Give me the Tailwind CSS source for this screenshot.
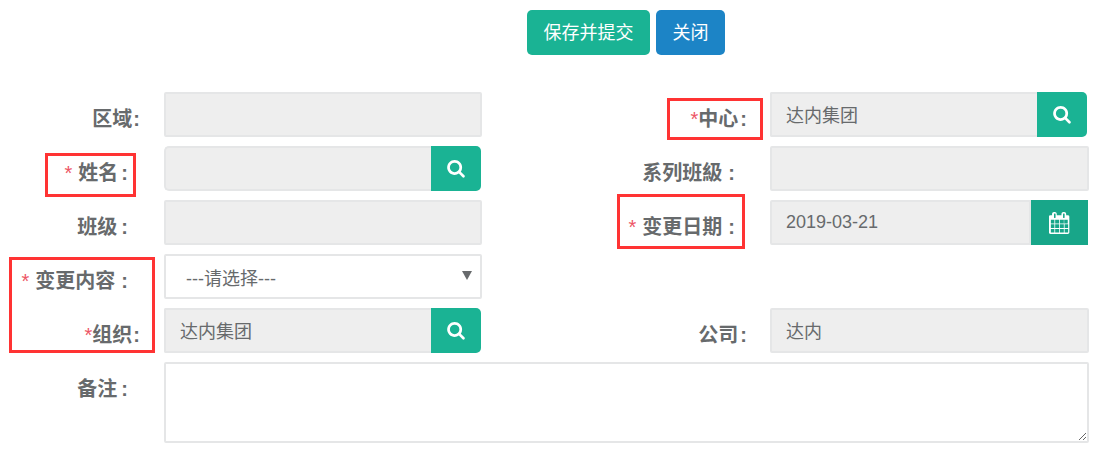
<!DOCTYPE html>
<html lang="zh-CN">
<head>
  <meta charset="UTF-8">
  <title>变更</title>
  <script src="https://cdn.jsdelivr.net/npm/@tailwindcss/browser@4"></script>
</head>
<body class="bg-white overflow-hidden font-['Liberation_Sans','Noto_Sans_CJK_SC',sans-serif] text-[18px] text-[#676a6c]">
<div class="relative w-[1101px] h-[450px] pt-[10px]">
  <!-- 按钮 -->
  <div class="flex gap-[6px] pl-[527px] mb-[37px]">
    <button type="button" class="h-[45px] w-[123px] pt-[1px] rounded-[5px] bg-[#1ab394] text-white">保存并提交</button>
    <button type="button" class="h-[45px] w-[69px] pt-[1px] rounded-[5px] bg-[#1c84c6] text-white">关闭</button>
  </div>

  <form class="grid grid-cols-[164px_318px_288px_319px] gap-y-[9px]">
    <!-- row 1 -->
    <label class="h-[45px] pt-[8px] pr-[24px] flex items-center justify-end font-bold text-[20px]">区域<span class="ml-[1px]">:</span></label>
    <input readonly class="h-[45px] w-[318px] border-2 border-[#e5e6e7] bg-[#eeeeee] rounded-[2px] px-[14px]">
    <label class="h-[45px] pt-[8px] pr-[23px] flex items-center justify-end font-bold text-[20px]"><span class="text-[#ed5565] font-normal">*</span>中心<span class="ml-[2px]">:</span></label>
    <div class="flex w-[317px]">
      <input readonly value="达内集团" class="h-[45px] w-[267px] border-2 border-r-0 border-[#e5e6e7] bg-[#eeeeee] rounded-l-[2px] px-[14px] pb-[2px]">
      <button type="button" class="h-[45px] w-[50px] pt-[1px] bg-[#1ab394] rounded-r-[5px] flex items-center justify-center">
        <svg class="w-[18px] h-[19px]" viewBox="0 0 1664 1792" fill="#fff"><path d="M1152 704q0-185-131.500-316.500t-316.500-131.500-316.500 131.500-131.500 316.500 131.500 316.500 316.500 131.500 316.500-131.500 131.500-316.500zm512 832q0 52-38 90t-90 38q-54 0-90-38l-343-342q-179 124-399 124-143 0-273.500-55.500t-225-150-150-225-55.500-273.500 55.500-273.500 150-225 225-150 273.500-55.500 273.500 55.500 225 150 150 225 55.500 273.500q0 220-124 399l343 343q37 37 37 90z"/></svg>
      </button>
    </div>

    <!-- row 2 -->
    <label class="h-[45px] pt-[8px] pr-[36px] flex items-center justify-end font-bold text-[20px]"><span class="text-[#ed5565] font-normal mr-[6px]">*</span>姓名<span class="ml-[3px]">:</span></label>
    <div class="flex w-[317px]">
      <input readonly class="h-[45px] w-[267px] border-2 border-r-0 border-[#e5e6e7] bg-[#eeeeee] rounded-l-[5px] px-[14px]">
      <button type="button" class="h-[45px] w-[50px] pt-[1px] bg-[#1ab394] rounded-r-[5px] flex items-center justify-center">
        <svg class="w-[18px] h-[19px]" viewBox="0 0 1664 1792" fill="#fff"><path d="M1152 704q0-185-131.500-316.500t-316.500-131.500-316.500 131.500-131.500 316.500 131.500 316.500 316.500 131.500 316.500-131.500 131.500-316.500zm512 832q0 52-38 90t-90 38q-54 0-90-38l-343-342q-179 124-399 124-143 0-273.500-55.500t-225-150-150-225-55.500-273.500 55.500-273.500 150-225 225-150 273.500-55.500 273.500 55.500 225 150 150 225 55.500 273.500q0 220-124 399l343 343q37 37 37 90z"/></svg>
      </button>
    </div>
    <label class="h-[45px] pt-[8px] pr-[35px] flex items-center justify-end font-bold text-[20px]">系列班級<span class="ml-[6px]">:</span></label>
    <input readonly class="h-[45px] w-[319px] border-2 border-[#e5e6e7] bg-[#eeeeee] rounded-[2px] px-[14px]">

    <!-- row 3 -->
    <label class="h-[45px] pt-[8px] pr-[36px] flex items-center justify-end font-bold text-[20px]">班级<span class="ml-[4px]">:</span></label>
    <input readonly class="h-[45px] w-[318px] border-2 border-[#e5e6e7] bg-[#eeeeee] rounded-[2px] px-[14px]">
    <label class="h-[45px] pt-[8px] pr-[35px] flex items-center justify-end font-bold text-[20px]"><span class="text-[#ed5565] font-normal mr-[6px]">*</span>变更日期<span class="ml-[6px]">:</span></label>
    <div class="flex w-[318px]">
      <input readonly value="2019-03-21" class="h-[45px] w-[261px] border-2 border-[#e5e6e7] bg-[#eeeeee] rounded-l-[2px] px-[14px]">
      <button type="button" class="h-[45px] w-[57px] bg-[#18a689] flex items-center justify-center">
        <svg class="w-[21px] h-[22px]" viewBox="0 0 1664 1792" fill="#fff"><path d="M128 1664h288v-288h-288v288zm352 0h320v-288h-320v288zm-352-352h288v-320h-288v320zm352 0h320v-320h-320v320zm-352-384h288v-288h-288v288zm736 736h320v-288h-320v288zm-384-736h320v-288h-320v288zm768 736h288v-288h-288v288zm-384-352h320v-320h-320v320zm-352-864v-288q0-13-9.500-22.500t-22.500-9.500h-64q-13 0-22.500 9.500t-9.500 22.500v288q0 13 9.500 22.500t22.500 9.500h64q13 0 22.500-9.500t9.500-22.500zm736 864h288v-320h-288v320zm-384-384h320v-288h-320v288zm352 0h288v-288h-288v288zm32-480v-288q0-13-9.500-22.500t-22.500-9.500h-64q-13 0-22.500 9.500t-9.500 22.500v288q0 13 9.500 22.500t22.500 9.500h64q13 0 22.500-9.500t9.500-22.500zm384-64v1280q0 52-38 90t-90 38h-1408q-52 0-90-38t-38-90v-1280q0-52 38-90t90-38h128v-96q0-66 47-113t113-47h64q66 0 113 47t47 113v96h384v-96q0-66 47-113t113-47h64q66 0 113 47t47 113v96h128q52 0 90 38t38 90z"/></svg>
      </button>
    </div>

    <!-- row 4 -->
    <label class="h-[45px] pt-[8px] pr-[36px] flex items-center justify-end font-bold text-[20px] whitespace-nowrap"><span class="text-[#ed5565] font-normal mr-[6px]">*</span>变更内容<span class="ml-[6px]">:</span></label>
    <div class="relative w-[318px]">
      <select class="appearance-none h-[45px] w-[318px] border-2 border-[#e5e6e7] bg-white rounded-[2px] pl-[20px] pt-[6px]">
        <option>---请选择---</option>
      </select>
      <svg class="absolute left-[298px] top-[17px] w-[10px] h-[9px]" viewBox="0 0 10 9" fill="#676a6c"><path d="M0 0h10L5 9z"/></svg>
    </div>
    <div class="col-span-2"></div>

    <!-- row 5 -->
    <label class="h-[45px] pt-[8px] pr-[24px] flex items-center justify-end font-bold text-[20px]"><span class="text-[#ed5565] font-normal">*</span>组织<span class="ml-[1px]">:</span></label>
    <div class="flex w-[317px]">
      <input readonly value="达内集团" class="h-[45px] w-[267px] border-2 border-r-0 border-[#e5e6e7] bg-[#eeeeee] rounded-l-[2px] px-[14px] pb-[2px]">
      <button type="button" class="h-[45px] w-[50px] pt-[1px] bg-[#1ab394] rounded-r-[5px] flex items-center justify-center">
        <svg class="w-[18px] h-[19px]" viewBox="0 0 1664 1792" fill="#fff"><path d="M1152 704q0-185-131.500-316.500t-316.500-131.500-316.500 131.500-131.500 316.500 131.500 316.500 316.500 131.500 316.500-131.500 131.500-316.500zm512 832q0 52-38 90t-90 38q-54 0-90-38l-343-342q-179 124-399 124-143 0-273.500-55.500t-225-150-150-225-55.500-273.500 55.500-273.500 150-225 225-150 273.500-55.500 273.500 55.500 225 150 150 225 55.500 273.500q0 220-124 399l343 343q37 37 37 90z"/></svg>
      </button>
    </div>
    <label class="h-[45px] pt-[8px] pr-[23px] flex items-center justify-end font-bold text-[20px]">公司<span class="ml-[2px]">:</span></label>
    <input readonly value="达内" class="h-[45px] w-[319px] border-2 border-[#e5e6e7] bg-[#eeeeee] rounded-[2px] px-[14px] pb-[2px]">

    <!-- row 6 -->
    <label class="h-[45px] pt-[8px] pr-[36px] flex items-center justify-end font-bold text-[20px]">备注<span class="ml-[4px]">:</span></label>
    <textarea class="col-span-3 h-[81px] w-[925px] border-2 border-[#e5e6e7] bg-white rounded-[2px] block"></textarea>
  </form>

  <!-- 红色标注框 -->
  <div class="absolute left-[45px] top-[153px] w-[91px] h-[44px] border-[3px] border-[#ff3333]"></div>
  <div class="absolute left-[667px] top-[98px] w-[96px] h-[42px] border-[3px] border-[#ff3333]"></div>
  <div class="absolute left-[617px] top-[194px] w-[128px] h-[55px] border-[3px] border-[#ff3333]"></div>
  <div class="absolute left-[9px] top-[257px] w-[146px] h-[96px] border-[3px] border-[#ff3333]"></div>
</div>
</body>
</html>
